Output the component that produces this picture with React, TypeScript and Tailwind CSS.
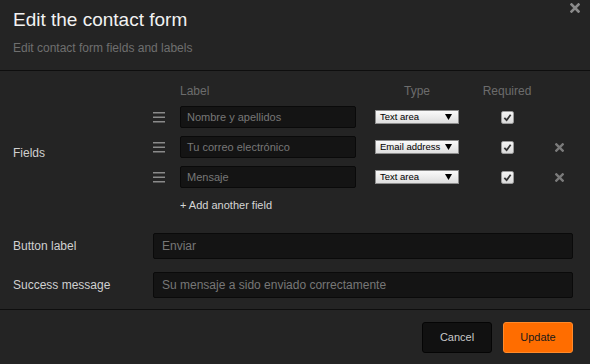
const fields = [
  { label: "Nombre y apellidos", type: "Text area", removable: false },
  { label: "Tu correo electrónico", type: "Email address", removable: true },
  { label: "Mensaje", type: "Text area", removable: true },
];

const Handle = () => (
  <svg width="12" height="12" viewBox="0 0 12 12">
    <rect x="0" y="1" width="12" height="1.5" fill="#8a8a8a" />
    <rect x="0" y="5.5" width="12" height="1.5" fill="#8a8a8a" />
    <rect x="0" y="10" width="12" height="1.5" fill="#8a8a8a" />
  </svg>
);

const Cross = ({ size = 9, color = "#7a7a7a" }: { size?: number; color?: string }) => (
  <svg width={size} height={size} viewBox="0 0 10 10">
    <path d="M1.5 1.5 L8.5 8.5 M8.5 1.5 L1.5 8.5" stroke={color} strokeWidth="2.6" strokeLinecap="square" />
  </svg>
);

const Checkbox = () => (
  <div className="w-[13px] h-[13px] rounded-[2px] border border-[#9a9a9a] bg-gradient-to-b from-[#f4f4f4] to-[#d8d8d8] flex items-center justify-center">
    <svg width="9" height="9" viewBox="0 0 10 10">
      <path d="M1.5 5.5 L4 8 L8.5 2" stroke="#333" strokeWidth="2" fill="none" />
    </svg>
  </div>
);

const Select = ({ value }: { value: string }) => (
  <div className="w-[84px] h-[14px] border border-[#8c8c8c] bg-gradient-to-b from-[#fafafa] to-[#dedede] flex items-center justify-between pl-[4px] pr-[6px] text-[9.5px] leading-none text-black whitespace-nowrap">
    <span>{value}</span>
    <svg width="7" height="6" viewBox="0 0 7 6" className="shrink-0">
      <path d="M0 0 H7 L3.5 6 Z" fill="#000" />
    </svg>
  </div>
);

export default function App() {
  return (
    <div className="w-[590px] h-[364px] bg-[#242424] flex flex-col font-['Liberation_Sans',Arial,sans-serif] overflow-hidden">
      {/* header */}
      <div className="relative h-[71px] px-[13px] pt-[8px] border-b border-[#0e0e0e]">
        <h1 className="text-[19px] leading-[24px] text-[#f2f2f2]">Edit the contact form</h1>
        <p className="mt-[9px] text-[12px] leading-[14px] text-[#6f6f6f]">Edit contact form fields and labels</p>
        <div className="absolute top-[3px] right-[10px]">
          <Cross size={10} color="#8a8a8a" />
        </div>
      </div>

      {/* body */}
      <div className="flex-1 flex flex-col pt-[13px]">
        <div className="flex">
          <div className="w-[153px] pl-[13px] pt-[62px] text-[12px] leading-[14px] text-[#d0d0d0]">Fields</div>
          <div className="flex flex-col">
            <div className="flex h-[14px] items-center text-[12px] text-[#6c6c6c]">
              <div className="w-[27px]" />
              <div className="w-[176px]">Label</div>
              <div className="w-[19px]" />
              <div className="w-[84px] text-center">Type</div>
              <div className="w-[96px] text-center">Required</div>
            </div>
            <div className="flex flex-col gap-[8px] mt-[8px]">
              {fields.map((f) => (
                <div key={f.label} className="flex items-center h-[22px]">
                  <div className="w-[27px] flex items-center">
                    <Handle />
                  </div>
                  <div className="w-[176px] h-[22px] bg-[#141414] border border-[#0a0a0a] rounded-[2px] flex items-center px-[6px] text-[11px] text-[#777]">
                    {f.label}
                  </div>
                  <div className="w-[19px]" />
                  <Select value={f.type} />
                  <div className="w-[96px] flex justify-center">
                    <Checkbox />
                  </div>
                  {f.removable && <Cross />}
                </div>
              ))}
            </div>
            <div className="pl-[27px] mt-[9px] text-[11px] text-[#d6d6d6] h-[14px]">+ Add another field</div>
          </div>
        </div>

        <div className="flex flex-col gap-[13px] mt-[22px] pr-[17px]">
          <div className="flex items-center">
            <div className="w-[153px] pl-[13px] text-[12px] text-[#d0d0d0]">Button label</div>
            <div className="flex-1 h-[26px] bg-[#141414] border border-[#0a0a0a] rounded-[2px] flex items-center px-[8px] text-[12px] text-[#777]">
              Enviar
            </div>
          </div>
          <div className="flex items-center">
            <div className="w-[153px] pl-[13px] text-[12px] text-[#d0d0d0]">Success message</div>
            <div className="flex-1 h-[26px] bg-[#141414] border border-[#0a0a0a] rounded-[2px] flex items-center px-[8px] text-[12px] text-[#777]">
              Su mensaje a sido enviado correctamente
            </div>
          </div>
        </div>
      </div>

      {/* footer */}
      <div className="h-[55px] border-t border-[#0e0e0e] flex items-center justify-end gap-[11px] pr-[17px]">
        <button className="w-[70px] h-[31px] bg-[#111] border border-[#050505] rounded-[3px] text-[11px] text-[#c8c8c8]">
          Cancel
        </button>
        <button className="w-[70px] h-[31px] bg-[#ff6d00] border border-[#ff8a2a] rounded-[3px] text-[11px] text-[#1a1a1a]">
          Update
        </button>
      </div>
    </div>
  );
}
